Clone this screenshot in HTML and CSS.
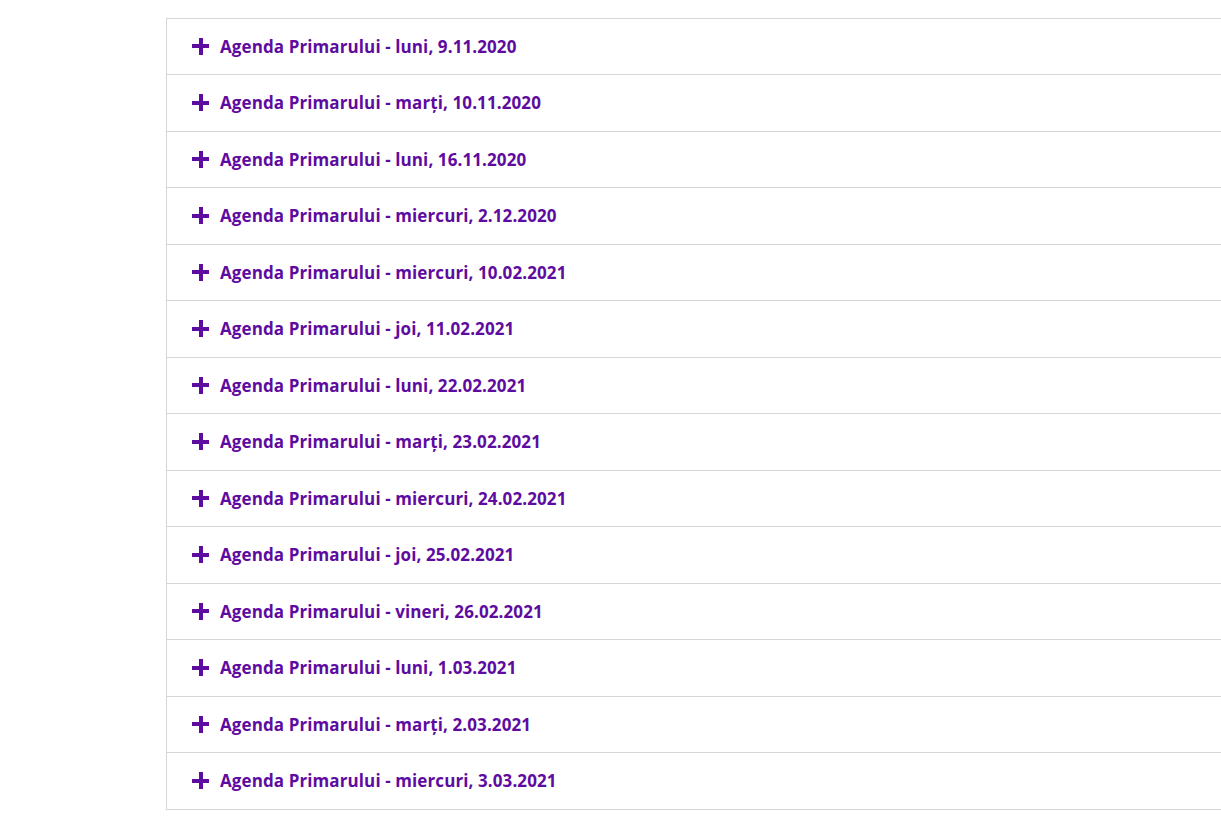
FILE: index.html
```html
<!DOCTYPE html>
<html lang="ro">
<head>
	<meta charset="UTF-8">
	<title>Agenda Primarului</title>
	<link rel="stylesheet" href="styles.css">
</head>
<body>
<div class="accordion">
	<div class="item"><span class="plus"></span><span class="title">Agenda Primarului - luni, 9.11.2020</span></div>
	<div class="item"><span class="plus"></span><span class="title">Agenda Primarului - marți, 10.11.2020</span></div>
	<div class="item"><span class="plus"></span><span class="title">Agenda Primarului - luni, 16.11.2020</span></div>
	<div class="item"><span class="plus"></span><span class="title">Agenda Primarului - miercuri, 2.12.2020</span></div>
	<div class="item"><span class="plus"></span><span class="title">Agenda Primarului - miercuri, 10.02.2021</span></div>
	<div class="item"><span class="plus"></span><span class="title">Agenda Primarului - joi, 11.02.2021</span></div>
	<div class="item"><span class="plus"></span><span class="title">Agenda Primarului - luni, 22.02.2021</span></div>
	<div class="item"><span class="plus"></span><span class="title">Agenda Primarului - marți, 23.02.2021</span></div>
	<div class="item"><span class="plus"></span><span class="title">Agenda Primarului - miercuri, 24.02.2021</span></div>
	<div class="item"><span class="plus"></span><span class="title">Agenda Primarului - joi, 25.02.2021</span></div>
	<div class="item"><span class="plus"></span><span class="title">Agenda Primarului - vineri, 26.02.2021</span></div>
	<div class="item"><span class="plus"></span><span class="title">Agenda Primarului - luni, 1.03.2021</span></div>
	<div class="item"><span class="plus"></span><span class="title">Agenda Primarului - marți, 2.03.2021</span></div>
	<div class="item"><span class="plus"></span><span class="title">Agenda Primarului - miercuri, 3.03.2021</span></div>
</div>
</body>
</html>
```

FILE: styles.css
```css
* {
	margin: 0;
	padding: 0;
	box-sizing: border-box;
}
html, body {
	overflow: hidden;
}
body {
	padding: 17.6px 0 0 166px;
	font-family: "Open Sans", Lato, sans-serif;
	background: #fff;
}
.accordion {
	width: 1100px;
	border-top: 1px solid #d6d6d6;
	border-left: 1px solid #d6d6d6;
}
.item {
	height: 56.5px;
	border-bottom: 1px solid #d6d6d6;
	display: flex;
	align-items: center;
	padding-left: 25px;
	cursor: pointer;
}
.plus {
	position: relative;
	width: 17px;
	height: 17px;
	margin-right: 11px;
	flex-shrink: 0;
}
.plus::before,
.plus::after {
	content: "";
	position: absolute;
	background: #5e0ba0;
}
.plus::before {
	left: 0;
	top: 6.5px;
	width: 17px;
	height: 4px;
}
.plus::after {
	left: 6.5px;
	top: 0;
	width: 4px;
	height: 17px;
}
.title {
	color: #5e0ba0;
	font-size: 17px;
	font-weight: bold;
	letter-spacing: 0.1px;
}
```
